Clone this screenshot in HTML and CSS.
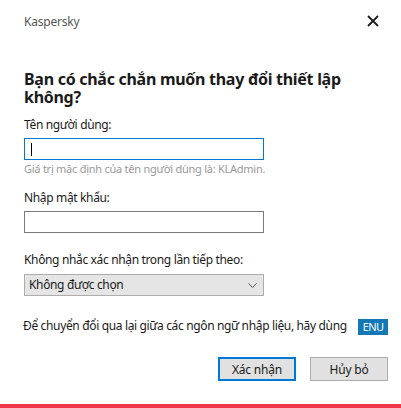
FILE: index.html
```html
<!DOCTYPE html>
<html lang="vi">
<head>
<meta charset="utf-8">
<link rel="stylesheet" href="styles.css">
</head>
<body>
<div class="dialog">
  <div class="header">
    <span class="brand">Kaspersky</span>
    <svg class="close" width="12" height="12" viewBox="0 0 12 12"><path d="M1 1 L11 11 M11 1 L1 11" stroke="#1a1a1a" stroke-width="1.8" fill="none"/></svg>
  </div>
  <h1 class="title">Bạn có chắc chắn muốn thay đổi thiết lập không?</h1>
  <label class="label first">Tên người dùng:</label>
  <div class="input focused"><span class="caret"></span></div>
  <div class="hint">Giá trị mặc định của tên người dùng là: KLAdmin.</div>
  <label class="label second">Nhập mật khẩu:</label>
  <div class="input"></div>
  <label class="label third">Không nhắc xác nhận trong lần tiếp theo:</label>
  <div class="select">
    <span>Không được chọn</span>
    <svg class="chev" width="9" height="5" viewBox="0 0 9 5"><path d="M0.5 0.5 L4.5 4.5 L8.5 0.5" stroke="#555" stroke-width="1" fill="none"/></svg>
  </div>
  <div class="langrow">
    <span class="langtext">Để chuyển đổi qua lại giữa các ngôn ngữ nhập liệu, hãy dùng</span>
    <span class="enu">ENU</span>
  </div>
  <div class="buttons">
    <button class="btn primary">Xác nhận</button>
    <button class="btn">Hủy bỏ</button>
  </div>
</div>
<div class="redbar"></div>
</body>
</html>
```
FILE: styles.css
```css
html, body {
  margin: 0;
  padding: 0;
  background: #ffffff;
}
body {
  width: 401px;
  height: 408px;
  position: relative;
  overflow: hidden;
  font-family: "Noto Sans", "Open Sans", sans-serif;
  color: #1a1a1a;
  letter-spacing: -0.35px;
}
.dialog {
  padding: 0 13px 0 24px;
}
.header {
  display: flex;
  justify-content: space-between;
  align-items: flex-start;
  padding-top: 14px;
  height: 16px;
}
.brand {
  font-size: 12px;
  line-height: 16px;
  color: #555555;
  letter-spacing: -0.2px;
}
.close {
  margin-top: 1px;
  margin-right: 9px;
}
.title {
  margin: 40px 0 0 0;
  font-size: 16px;
  line-height: 18px;
  font-weight: 700;
  color: #1a1a1a;
  width: 345px;
  letter-spacing: -0.28px;
}
.label {
  display: block;
  font-size: 12px;
  line-height: 16px;
  color: #1a1a1a;
}
.label.first { margin-top: 11px; }
.label.second { margin-top: 14px; }
.label.third { margin-top: 19px; }
.input {
  box-sizing: border-box;
  width: 240px;
  height: 22px;
  margin-top: 5px;
  border: 1px solid #7a7a7a;
  background: #fff;
  display: flex;
  align-items: center;
  padding-left: 6px;
}
.input.focused {
  border-color: #0078d7;
}
.caret {
  width: 1px;
  height: 13px;
  background: #000;
}
.hint {
  margin-top: 1px;
  font-size: 11px;
  line-height: 15px;
  color: #999999;
  letter-spacing: -0.25px;
}
.select {
  box-sizing: border-box;
  width: 240px;
  height: 22px;
  margin-top: 6px;
  border: 1px solid #adadad;
  background: #e5e5e5;
  display: flex;
  align-items: center;
  justify-content: space-between;
  padding: 0 6px 0 4px;
  font-size: 12px;
  line-height: 16px;
}
.langrow {
  margin-top: 21px;
  display: flex;
  align-items: center;
  justify-content: space-between;
  font-size: 12px;
  line-height: 16px;
  margin-left: -1px;
}
.langtext {
  white-space: nowrap;
}
.enu {
  box-sizing: border-box;
  width: 30px;
  height: 16px;
  display: flex;
  align-items: center;
  justify-content: center;
  background: #1279b6;
  color: #ffffff;
  font-size: 11px;
  line-height: 14px;
  letter-spacing: -0.6px;
  margin-top: 2px;
}
.buttons {
  display: flex;
  justify-content: flex-end;
  gap: 14px;
  margin-top: 22px;
}
.btn {
  box-sizing: border-box;
  width: 78px;
  height: 24px;
  border: 1px solid #adadad;
  background: #e1e1e1;
  font-family: "Noto Sans", "Open Sans", sans-serif;
  font-size: 12px;
  letter-spacing: -0.2px;
  color: #1a1a1a;
  padding: 0;
}
.btn.primary {
  border: 2px solid #0078d7;
}
.redbar {
  position: absolute;
  left: 0;
  right: 0;
  bottom: 0;
  height: 4px;
  background: #f0394a;
}
```
